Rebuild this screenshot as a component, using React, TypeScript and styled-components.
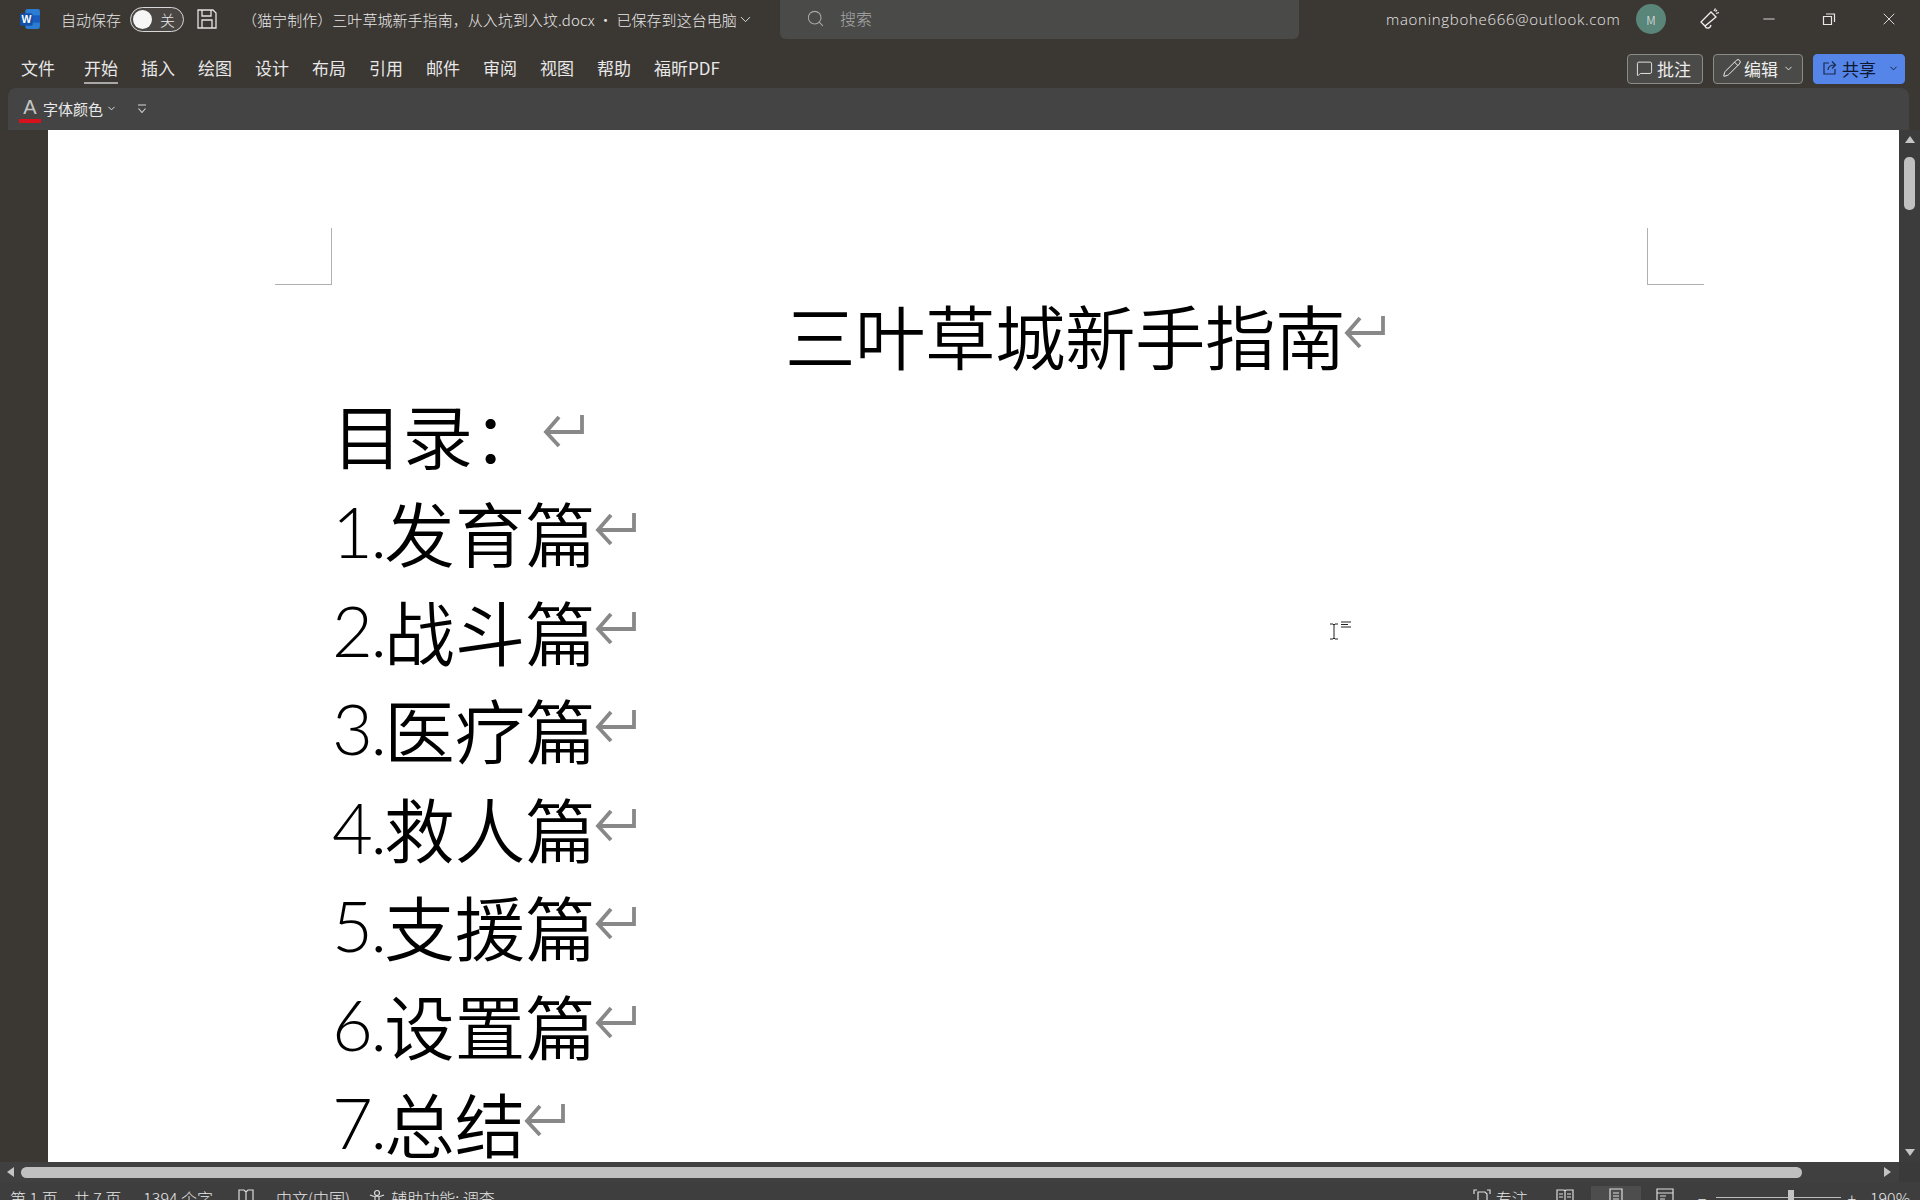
import React, { FC } from "react";
import styled, { createGlobalStyle } from "styled-components";
import { ChevronDown, MessageSquare, Minus, Pencil, Search, X } from "lucide-react";

const UI_FONT = `"Noto Sans CJK SC", "Noto Sans", sans-serif`;

const GlobalStyle = createGlobalStyle`
  html, body {
    margin: 0;
    padding: 0;
    background: #3b3733;
  }
  * {
    box-sizing: border-box;
  }
`;

const Page = styled.div`
  width: 1920px;
  height: 1200px;
  overflow: hidden;
  display: flex;
  flex-direction: column;
  background: #3b3733;
  color: #e8e8e8;
  font-family: ${UI_FONT};
`;

const TitleBar = styled.header`
  height: 40px;
  flex: none;
  display: flex;
  align-items: center;
  padding-bottom: 2px;
  font-size: 15px;
  font-weight: 300;
`;

const WordLogo = styled.svg`
  margin-left: 19px;
  width: 22px;
  height: 22px;
  flex: none;
`;

const AutoSaveLabel = styled.span`
  margin-left: 20px;
  width: 60px;
  white-space: nowrap;
`;

const Toggle = styled.div`
  margin-left: 9px;
  width: 54px;
  height: 25px;
  border: 1px solid #d8d8d8;
  border-radius: 13px;
  display: flex;
  align-items: center;
  padding: 0 2px;
  gap: 8px;
  background: #494643;
`;

const ToggleKnob = styled.span`
  width: 19px;
  height: 19px;
  border-radius: 50%;
  background: #f6f6f6;
`;

const SaveIcon = styled.svg`
  margin-left: 13px;
  width: 20px;
  height: 20px;
  flex: none;
`;

const DocTitle = styled.div`
  margin-left: 25px;
  width: 493px;
  white-space: nowrap;
  letter-spacing: 0.05px;
`;

const TitleChevron = styled(ChevronDown)`
  margin-left: 2px;
  flex: none;
`;

const SearchBox = styled.div`
  margin-left: 26px;
  align-self: flex-start;
  width: 519px;
  height: 39px;
  flex: none;
  display: flex;
  align-items: center;
  gap: 15px;
  padding: 0 0 3px 26px;
  background: #4a4a48;
  border-radius: 0 0 6px 6px;
  color: #a8a8a8;
  font-size: 16px;
`;

const Email = styled.span`
  margin-left: 87px;
  width: 238px;
  font-family: "Open Sans", "Noto Sans", sans-serif;
  font-size: 15px;
  letter-spacing: 0.7px;
  white-space: nowrap;
`;

const Avatar = styled.div`
  margin-left: 12px;
  width: 30px;
  height: 30px;
  flex: none;
  border-radius: 50%;
  background: #5a8579;
  display: flex;
  align-items: center;
  justify-content: center;
  font-size: 12px;
`;

const WindowButton = styled.span<{ $gap: number }>`
  margin-left: ${(p) => p.$gap}px;
  width: 24px;
  height: 24px;
  flex: none;
  display: flex;
  align-items: center;
  justify-content: center;
`;

const TabRow = styled.nav`
  height: 48px;
  flex: none;
  display: flex;
  padding: 0 15px 0 21px;
  gap: 23px;
  font-size: 17px;
`;

const Tab = styled.div<{ $active?: boolean; $wide?: boolean }>`
  position: relative;
  height: 44px;
  line-height: 56px;
  margin-left: ${(p) => (p.$wide ? 6 : 0)}px;
  white-space: nowrap;

  &::after {
    content: "";
    display: ${(p) => (p.$active ? "block" : "none")};
    position: absolute;
    left: 0;
    right: 0;
    bottom: 0;
    height: 2px;
    background: #a8a8a8;
  }
`;

const TabActions = styled.div`
  margin-left: auto;
  display: flex;
  gap: 10px;
  padding-top: 14px;
`;

const ActionButton = styled.button<{ $width: number; $primary?: boolean; $gap?: number }>`
  width: ${(p) => p.$width}px;
  height: 30px;
  display: flex;
  align-items: center;
  gap: ${(p) => p.$gap ?? 4}px;
  padding: 0 0 2px 8px;
  border: 1px solid ${(p) => (p.$primary ? "#5585e8" : "#8b8b88")};
  border-radius: 4px;
  background: ${(p) => (p.$primary ? "#5585e8" : "#4a4a48")};
  color: ${(p) => (p.$primary ? "#0f1830" : "#eeeeee")};
  font-family: ${UI_FONT};
  font-size: 17px;
`;

const ButtonChevron = styled(ChevronDown)<{ $gap?: number }>`
  margin-left: ${(p) => p.$gap ?? 0}px;
  flex: none;
`;

const QuickBar = styled.div`
  height: 42px;
  flex: none;
  margin: 0 11px 0 8px;
  display: flex;
  align-items: center;
  background: #444444;
  border-radius: 8px 8px 0 0;
  padding: 0 0 1px 11px;
  font-size: 15px;
`;

const FontColorIcon = styled.span`
  width: 22px;
  height: 28px;
  flex: none;
  border-bottom: 4px solid #d7121c;
  color: #c4c4c4;
  font-family: "Liberation Sans", sans-serif;
  font-size: 20px;
  line-height: 24px;
  text-align: center;
`;

const QuickLabel = styled.span`
  margin: 0 3px 0 2px;
`;

const Overflow = styled.svg`
  margin-left: 19px;
  width: 12px;
  height: 12px;
`;

const Workspace = styled.main`
  height: 1032px;
  flex: none;
  display: flex;
`;

const Gutter = styled.div`
  width: 48px;
  flex: none;
`;

const Sheet = styled.article`
  position: relative;
  width: 1851px;
  flex: none;
  padding: 155px 0 0 284px;
  background: #ffffff;
  color: #000000;
  font-family: "Noto Sans CJK SC", sans-serif;
  font-weight: 350;
  font-size: 70.5px;
  line-height: 98.5px;
  overflow: hidden;
`;

const CropMark = styled.span<{ $side: "left" | "right" }>`
  position: absolute;
  top: 98px;
  ${(p) => (p.$side === "left" ? "left: 227px;" : "left: 1599px;")}
  width: 57px;
  height: 57px;
  border-bottom: 1px solid #b0b0b0;
  ${(p) =>
    p.$side === "left"
      ? "border-right: 1px solid #b0b0b0;"
      : "border-left: 1px solid #b0b0b0;"}
`;

const DocLine = styled.p<{ $indent?: number; $tight?: boolean }>`
  margin: 0 0 0 ${(p) => p.$indent ?? 0}px;
  height: 98.5px;
  display: flex;
  align-items: center;
  white-space: nowrap;
  letter-spacing: ${(p) => (p.$tight ? "-0.5px" : "normal")};
`;

const ListNumber = styled.span`
  font-family: Lato, sans-serif;
  font-weight: 300;
  letter-spacing: -2.5px;
`;

const ReturnMark = styled.svg`
  width: 42px;
  height: 36px;
  flex: none;
  margin: 0 0 4px -2px;
`;

const TextCursor = styled.svg`
  position: absolute;
  left: 1281px;
  top: 491px;
  width: 24px;
  height: 20px;
`;

const VScroll = styled.aside`
  flex: 1;
  display: flex;
  flex-direction: column;
  align-items: center;
  background: #3c3c3c;
  padding-top: 6px;
`;

const Arrow = styled.span<{ $dir: "up" | "down" | "left" | "right" }>`
  display: block;
  flex: none;
  width: 0;
  height: 0;
  border: 5px solid transparent;
  ${(p) =>
    p.$dir === "up"
      ? "border-bottom: 7px solid #c4c4c4; border-top: 0;"
      : p.$dir === "down"
      ? "border-top: 7px solid #c4c4c4; border-bottom: 0;"
      : p.$dir === "left"
      ? "border-right: 7px solid #c4c4c4; border-left: 0;"
      : "border-left: 7px solid #c4c4c4; border-right: 0;"}
`;

const VThumb = styled.div`
  margin-top: 14px;
  width: 11px;
  height: 53px;
  border-radius: 5px;
  background: #c0c0c0;
`;

const VSpacer = styled.div`
  flex: 1;
`;

const VEnd = styled.div`
  margin-bottom: 6px;
`;

const HScroll = styled.div`
  height: 20px;
  flex: none;
  display: flex;
  align-items: center;
  background: #404040;
  padding-left: 7px;
`;

const HThumb = styled.div`
  margin-left: 7px;
  width: 1781px;
  height: 11px;
  border-radius: 6px;
  background: #c0c0c0;
`;

const HCorner = styled.div`
  margin-left: auto;
  width: 21px;
  height: 20px;
  background: #3a3a3a;
`;

const HEnd = styled.span`
  margin-left: 82px;
  margin-right: 6px;
`;

const StatusBar = styled.footer`
  height: 30px;
  flex: none;
  display: flex;
  align-items: flex-start;
  padding: 6px 10px 0 0;
  background: #3e3e3e;
  font-size: 16px;
  font-weight: 300;
  line-height: 20px;
  white-space: nowrap;
`;

const StatusItem = styled.span<{ $left: number }>`
  margin-left: ${(p) => p.$left}px;
  display: flex;
  align-items: center;
  gap: 5px;
`;

const StatusIcon = styled.svg<{ $left?: number }>`
  margin-left: ${(p) => p.$left ?? 0}px;
  width: 18px;
  height: 18px;
  flex: none;
`;

const StatusRight = styled.div`
  margin-left: auto;
  display: flex;
  align-items: flex-start;
`;

const LayoutActive = styled.span`
  margin-left: 17px;
  margin-top: -2px;
  width: 50px;
  height: 24px;
  display: flex;
  justify-content: center;
  padding-top: 2px;
  background: #4d4d4d;
`;

const ZoomTrack = styled.div`
  position: relative;
  margin: 9px 0 0 10px;
  width: 125px;
  height: 1px;
  background: #bdbdbd;
`;

const ZoomThumb = styled.span`
  position: absolute;
  left: 72px;
  top: -7px;
  width: 6px;
  height: 15px;
  background: #c4c4c4;
`;

const ReturnArrow: FC = (): JSX.Element => (
  <ReturnMark viewBox="0 0 42 36">
    <path
      d="M40 2v17H4M17 4 4 19l13 14"
      fill="none"
      stroke="#888888"
      strokeWidth="3.8"
    />
  </ReturnMark>
);

const tabs: string[] = ["插入", "绘图", "设计", "布局", "引用", "邮件", "审阅", "视图", "帮助"];
const contents: { num: string; label: string }[] = [
  { num: "1.", label: "发育篇" },
  { num: "2.", label: "战斗篇" },
  { num: "3.", label: "医疗篇" },
  { num: "4.", label: "救人篇" },
  { num: "5.", label: "支援篇" },
  { num: "6.", label: "设置篇" },
  { num: "7.", label: "总结" },
];

const App: FC = (): JSX.Element => {
  return (
    <Page>
      <GlobalStyle />
      <TitleBar>
        <WordLogo viewBox="0 0 21 21">
          <rect x="6" y="1" width="14" height="19" rx="2" fill="#2b7cd3" />
          <rect x="6" y="7" width="14" height="7" fill="#185abd" />
          <rect x="1" y="5" width="12" height="12" rx="1.5" fill="#1550a8" />
          <text x="7" y="14.5" fontSize="10" fontWeight="700" fill="#ffffff" textAnchor="middle" fontFamily="Liberation Sans">
            W
          </text>
        </WordLogo>
        <AutoSaveLabel>自动保存</AutoSaveLabel>
        <Toggle>
          <ToggleKnob />
          <span>关</span>
        </Toggle>
        <SaveIcon viewBox="0 0 20 20">
          <path d="M1 1h15l3 3v15H1zM5 1v6h9V1M5 19v-8h10v8" fill="none" stroke="#e4e4e4" strokeWidth="1.300" />
        </SaveIcon>
        <DocTitle>（猫宁制作）三叶草城新手指南，从入坑到入坟.docx • 已保存到这台电脑</DocTitle>
        <TitleChevron size={17} strokeWidth={1.3} />
        <SearchBox>
          <Search size={19} strokeWidth={1.3} />
          搜索
        </SearchBox>
        <Email>maoningbohe666@outlook.com</Email>
        <Avatar>M</Avatar>
        <WindowButton $gap={32}>
          <svg width="24" height="24" viewBox="0 0 24 24">
            <path
              d="M13 5 18 10 7 19 3 15ZM7 19c1 3 5 3 6-1M16 4l1.500-2.500M18 6.500l3-1M17.500 4.500 19 3"
              fill="none"
              stroke="#efefef"
              strokeWidth="1.300"
            />
          </svg>
        </WindowButton>
        <WindowButton $gap={35}>
          <Minus size={18} strokeWidth={1.2} />
        </WindowButton>
        <WindowButton $gap={36}>
          <svg width="14" height="14" viewBox="0 0 14 14">
            <path d="M1.500 4.500h8v8h-8zM4 2h8.500v8" fill="none" stroke="#e8e8e8" strokeWidth="1.200" />
          </svg>
        </WindowButton>
        <WindowButton $gap={36}>
          <X size={20} strokeWidth={1.1} />
        </WindowButton>
      </TitleBar>

      <TabRow>
        <Tab>文件</Tab>
        <Tab $active $wide>开始</Tab>
        {tabs.map((tab) => (
          <Tab key={tab}>{tab}</Tab>
        ))}
        <Tab>福昕PDF</Tab>
        <TabActions>
          <ActionButton $width={76}>
            <MessageSquare size={17} strokeWidth={1.3} />
            批注
          </ActionButton>
          <ActionButton $width={90} $gap={2}>
            <Pencil size={20} strokeWidth={1.2} />
            编辑
            <ButtonChevron size={11} $gap={3} />
          </ActionButton>
          <ActionButton $width={92} $primary>
            <svg width="16" height="16" viewBox="0 0 16 16">
              <path d="M7 3H2v11h11V9M6 10c0-3 2-5 7-5M10 1.500 13.500 5 10 8.500" fill="none" stroke="#1c2a4a" strokeWidth="1.200" />
            </svg>
            共享
            <ButtonChevron size={11} $gap={8} />
          </ActionButton>
        </TabActions>
      </TabRow>

      <QuickBar>
        <FontColorIcon>A</FontColorIcon>
        <QuickLabel>字体颜色</QuickLabel>
        <ChevronDown size={11} />
        <Overflow viewBox="0 0 12 12">
          <path d="M2 2h8M2.500 5.500 6 9.500l3.500-4" fill="none" stroke="#d8d8d8" strokeWidth="1.100" />
        </Overflow>
      </QuickBar>

      <Workspace>
        <Gutter />
        <Sheet>
          <CropMark $side="left" />
          <CropMark $side="right" />
          <DocLine $indent={453} $tight>
            三叶草城新手指南
            <ReturnArrow />
          </DocLine>
          <DocLine>
            目录：
            <ReturnArrow />
          </DocLine>
          {contents.map((line) => (
            <DocLine key={line.num}>
              <ListNumber>{line.num}</ListNumber>
              {line.label}
              <ReturnArrow />
            </DocLine>
          ))}
          <TextCursor viewBox="0 0 24 20">
            <path d="M1 3h3l1 1 1-1h3M5 4v13M1 18h3l1-1 1 1h3" fill="none" stroke="#222222" strokeWidth="1" />
            <path d="M12 1h10M12 3.500h7M12 6h10" fill="none" stroke="#222222" strokeWidth="1" />
          </TextCursor>
        </Sheet>
        <VScroll>
          <Arrow $dir="up" />
          <VThumb />
          <VSpacer />
          <VEnd>
            <Arrow $dir="down" />
          </VEnd>
        </VScroll>
      </Workspace>

      <HScroll>
        <Arrow $dir="left" />
        <HThumb />
        <HEnd>
          <Arrow $dir="right" />
        </HEnd>
        <HCorner />
      </HScroll>

      <StatusBar>
        <StatusItem $left={10}>第 1 页，共 7 页</StatusItem>
        <StatusItem $left={22}>1394 个字</StatusItem>
        <StatusIcon $left={24} viewBox="0 0 18 18">
          <path d="M2 2h5l2 2 2-2h5v13H2zM9 4v11" fill="none" stroke="#dddddd" strokeWidth="1.200" />
        </StatusIcon>
        <StatusItem $left={21}>中文(中国)</StatusItem>
        <StatusItem $left={18}>
          <svg width="18" height="18" viewBox="0 0 18 18">
            <circle cx="9" cy="4" r="2.500" fill="none" stroke="#dddddd" strokeWidth="1.200" />
            <path d="M2 6c4 2 10 2 14 0M7 8v9M11 8v9" fill="none" stroke="#dddddd" strokeWidth="1.200" />
          </svg>
          辅助功能: 调查
        </StatusItem>
        <StatusRight>
          <StatusItem $left={0}>
            <svg width="18" height="18" viewBox="0 0 18 18">
              <path d="M1 5V1h3M14 1h3v4M5 3h7l2 2v12H5z" fill="none" stroke="#dddddd" strokeWidth="1.200" />
            </svg>
            专注
          </StatusItem>
          <StatusIcon $left={28} viewBox="0 0 18 18">
            <path d="M1 2h7l1 1 1-1h7v14H1zM9 3v13M3 6h4M3 9h4M11 6h4M11 9h4" fill="none" stroke="#dddddd" strokeWidth="1.200" />
          </StatusIcon>
          <LayoutActive>
            <StatusIcon viewBox="0 0 18 18">
              <path d="M3 1h12v16H3zM6 5h6M6 8h6M6 11h6" fill="none" stroke="#dddddd" strokeWidth="1.200" />
            </StatusIcon>
          </LayoutActive>
          <StatusIcon $left={15} viewBox="0 0 18 18">
            <path d="M1 1h16v16H1zM1 5h16M4 8h6M4 11h5" fill="none" stroke="#dddddd" strokeWidth="1.200" />
          </StatusIcon>
          <StatusItem $left={24}>−</StatusItem>
          <ZoomTrack>
            <ZoomThumb />
          </ZoomTrack>
          <StatusItem $left={6}>+</StatusItem>
          <StatusItem $left={14}>190%</StatusItem>
        </StatusRight>
      </StatusBar>
    </Page>
  );
};

export default App;
